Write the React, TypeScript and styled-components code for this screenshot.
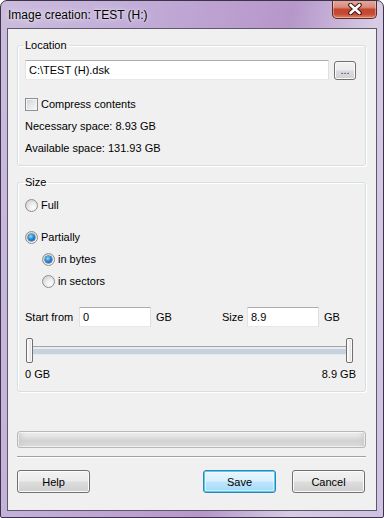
import styled, { createGlobalStyle, css } from 'styled-components';

const GlobalStyle = createGlobalStyle`
  html, body {
    margin: 0;
    padding: 0;
    background: #ffffff;
  }

  body {
    font-family: 'Liberation Sans', Arial, sans-serif;
    font-size: 11px;
    color: #000;
  }
`;

const Frame = styled.div`
  width: 384px;
  height: 518px;
  box-sizing: border-box;
  border: 1px solid #3a3446;
  border-radius: 7px 7px 2px 2px;
  padding: 0 6px 6px;
  display: flex;
  flex-direction: column;
  background: linear-gradient(
    100deg,
    #cbbcdd 0%,
    #c3afd9 25%,
    #b99bcd 55%,
    #b597c9 62%,
    #d7cbe5 80%,
    #cfc1e1 100%
  );
  overflow: hidden;
`;

const TitleBar = styled.div`
  height: 27px;
  display: flex;
  align-items: center;
  padding-left: 1px;
`;

const Title = styled.span`
  font-size: 12px;
  text-shadow: 0 0 6px rgba(255, 255, 255, 0.9), 0 0 2px rgba(255, 255, 255, 0.7);
`;

const CloseButton = styled.div`
  margin-left: auto;
  align-self: flex-start;
  margin-top: -1px;
  width: 45px;
  height: 19px;
  box-sizing: border-box;
  border: 1px solid #5a2a26;
  border-top: none;
  border-radius: 0 0 5px 5px;
  background: linear-gradient(
    #e6ab9e 0%,
    #d98b7c 40%,
    #c6452f 52%,
    #c54a35 78%,
    #e08466 100%
  );
  box-shadow: inset 0 0 0 1px rgba(255, 255, 255, 0.35);
  display: flex;
  align-items: center;
  justify-content: center;
`;

const Client = styled.div`
  flex: 1;
  border: 1px solid #5e586b;
  background: #f0f0f0;
  padding: 10px 10px 0 9px;
  display: flex;
  flex-direction: column;
`;

const Group = styled.fieldset<{ $top?: number; $padTop: number }>`
  margin: ${p => p.$top ?? 0}px 0 0;
  padding: ${p => p.$padTop}px 9px 6px 7px;
  border: 1px solid #d5dfe5;
  border-radius: 3px;
  box-shadow: inset 1px 1px 0 #fff, 1px 1px 0 #fff;
  min-width: 0;
`;

const Legend = styled.legend`
  padding: 0 2px;
  margin-left: -2px;
  line-height: 13px;
`;

const Line = styled.div<{ $top?: number; $indent?: number; $height?: number }>`
  display: flex;
  align-items: center;
  height: ${p => p.$height ?? 22}px;
  margin-top: ${p => p.$top ?? 0}px;
  padding-left: ${p => p.$indent ?? 0}px;
`;

const TextBox = styled.input<{ $width?: number }>`
  box-sizing: border-box;
  height: 20px;
  width: ${p => (p.$width ? `${p.$width}px` : 'auto')};
  flex: ${p => (p.$width ? 'none' : '1')};
  min-width: 0;
  border: 1px solid;
  border-color: #abadb3 #dbdfe6 #e3e9ef #e2e3ea;
  background: #fff;
  padding: 0 3px;
  font: inherit;
  color: #000;
  outline: none;
`;

const buttonFace = css`
  box-sizing: border-box;
  border: 1px solid #707070;
  border-radius: 3px;
  background: linear-gradient(#f2f2f2 0%, #ebebeb 48%, #dddddd 52%, #cfcfcf 100%);
  box-shadow: inset 0 0 0 1px #fbfbfb;
  font: inherit;
  color: #000;
  padding: 0;
`;

const Button = styled.button<{ $primary?: boolean }>`
  ${buttonFace};
  width: 73px;
  height: 23px;

  ${p =>
    p.$primary &&
    css`
      border-color: #3c7fb1;
      background: linear-gradient(#eaf6fd 0%, #d9f0fc 48%, #bee6fd 52%, #a7d9f5 100%);
      box-shadow: inset 0 0 0 1px #48d1f9, inset 0 0 0 2px rgba(255, 255, 255, 0.5);
    `}
`;

const BrowseButton = styled.button`
  ${buttonFace};
  width: 22px;
  height: 19px;
  margin-left: 5px;
  line-height: 12px;
  color: #1a2a6c;
`;

const CheckBox = styled.span`
  width: 13px;
  height: 13px;
  box-sizing: border-box;
  border: 1px solid #8e8f8f;
  background: linear-gradient(135deg, #cbcfd5 0%, #e8e9eb 55%, #f6f6f6 100%);
  box-shadow: inset 0 0 0 1px #f4f4f4;
  margin-right: 3px;
`;

const Radio = styled.span<{ $checked?: boolean }>`
  position: relative;
  width: 13px;
  height: 13px;
  box-sizing: border-box;
  border-radius: 50%;
  border: 1px solid #8e8f8f;
  background: radial-gradient(circle at 65% 70%, #ffffff 0%, #ececec 40%, #c8c8c8 100%);
  margin-right: 3px;
  flex: none;

  ${p =>
    p.$checked &&
    css`
      &::after {
        content: '';
        position: absolute;
        left: 2px;
        top: 2px;
        width: 7px;
        height: 7px;
        border-radius: 50%;
        background: radial-gradient(circle at 40% 35%, #8fe0ff 0%, #2b8ad3 45%, #0e3f7e 100%);
        box-shadow: 0 0 0 0.5px #1b4f8c;
      }
    `}
`;

const FieldHalf = styled.div<{ $width?: number }>`
  display: flex;
  align-items: center;
  width: ${p => (p.$width ? `${p.$width}px` : 'auto')};
  flex: ${p => (p.$width ? 'none' : '1')};
`;

const FieldLabel = styled.span<{ $width: number }>`
  width: ${p => p.$width}px;
`;

const Unit = styled.span`
  margin-left: 5px;
`;

const Slider = styled.div`
  display: flex;
  align-items: center;
  height: 25px;
  margin-top: 11px;
  padding: 0 3px 0 1px;
`;

const Handle = styled.span`
  width: 7px;
  height: 25px;
  box-sizing: border-box;
  border: 1px solid #707070;
  border-radius: 2px;
  background: linear-gradient(90deg, #ffffff 0%, #f0f0f0 45%, #d6d6d6 100%);
  box-shadow: inset 0 0 0 1px #fafafa;
`;

const Track = styled.div`
  flex: 1;
  height: 9px;
  background: linear-gradient(
    #a4a4a4 0px,
    #a4a4a4 1px,
    #e8ecef 1px,
    #e8ecef 3px,
    #c6d3de 3px,
    #c6d3de 8px,
    #e4e9ed 8px
  );
`;

const Scale = styled.div`
  display: flex;
  justify-content: space-between;
  align-items: center;
  height: 22px;
`;

const Progress = styled.div`
  margin-top: 39px;
  height: 17px;
  box-sizing: border-box;
  border: 1px solid #b7b7b7;
  border-radius: 3px;
  background: linear-gradient(#f4f4f4 0%, #e2e2e2 30%, #d2d2d2 60%, #dedede 100%);
  box-shadow: inset 0 0 0 1px rgba(255, 255, 255, 0.6), inset 6px 0 6px -4px #c8c8c8,
    inset -6px 0 6px -4px #c8c8c8;
`;

const Separator = styled.div`
  margin-top: 8px;
  height: 1px;
  background: #a0a0a0;
  border-bottom: 1px solid #fff;
`;

const ButtonRow = styled.div`
  display: flex;
  margin-top: 12px;
  padding-right: 1px;

  & > :nth-child(2) {
    margin-left: auto;
    margin-right: 16px;
  }
`;

const CloseGlyph = () => (
  <svg width="14" height="12" viewBox="0 0 14 12">
    <path d="M2.5 2 L11.5 10 M11.5 2 L2.5 10" stroke="#3a1612" strokeWidth="4.6" strokeLinecap="round" />
    <path d="M2.5 2 L11.5 10 M11.5 2 L2.5 10" stroke="#ffffff" strokeWidth="2.6" strokeLinecap="round" />
  </svg>
);

const App = (): JSX.Element => (
  <>
    <GlobalStyle />
    <Frame>
      <TitleBar>
        <Title>Image creation: TEST (H:)</Title>
        <CloseButton>
          <CloseGlyph />
        </CloseButton>
      </TitleBar>

      <Client>
        <Group $padTop={8}>
          <Legend>Location</Legend>
          <Line $height={20}>
            <TextBox defaultValue="C:\TEST (H).dsk" />
            <BrowseButton type="button">...</BrowseButton>
          </Line>
          <Line $top={13}>
            <CheckBox />
            Compress contents
          </Line>
          <Line>Necessary space: 8.93 GB</Line>
          <Line>Available space: 131.93 GB</Line>
        </Group>

        <Group $top={10} $padTop={5}>
          <Legend>Size</Legend>
          <Line>
            <Radio />
            Full
          </Line>
          <Line $top={10}>
            <Radio $checked />
            Partially
          </Line>
          <Line $indent={17}>
            <Radio $checked />
            in bytes
          </Line>
          <Line $indent={17}>
            <Radio />
            in sectors
          </Line>
          <Line $top={15} $height={20}>
            <FieldHalf $width={197}>
              <FieldLabel $width={54}>Start from</FieldLabel>
              <TextBox $width={72} defaultValue="0" />
              <Unit>GB</Unit>
            </FieldHalf>
            <FieldHalf>
              <FieldLabel $width={25}>Size</FieldLabel>
              <TextBox $width={72} defaultValue="8.9" />
              <Unit>GB</Unit>
            </FieldHalf>
          </Line>
          <Slider>
            <Handle />
            <Track />
            <Handle />
          </Slider>
          <Scale>
            <span>0 GB</span>
            <span>8.9 GB</span>
          </Scale>
        </Group>

        <Progress />
        <Separator />

        <ButtonRow>
          <Button type="button">Help</Button>
          <Button type="button" $primary>
            Save
          </Button>
          <Button type="button">Cancel</Button>
        </ButtonRow>
      </Client>
    </Frame>
  </>
);

export default App;
